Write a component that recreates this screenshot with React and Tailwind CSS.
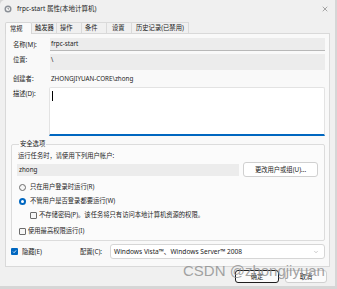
import { X, ChevronDown } from "lucide-react";

const font = { fontFamily: '"Noto Sans", "Noto Sans CJK SC", sans-serif' };

function Radio({ checked }) {
  return checked ? (
    <span className="flex h-[7px] w-[7px] items-center justify-center rounded-full bg-[#0067c0]">
      <span className="h-[3px] w-[3px] rounded-full bg-white" />
    </span>
  ) : (
    <span className="h-[7px] w-[7px] rounded-full border border-[#6b6b6b] bg-[#f6f6f6]" />
  );
}

function Check({ checked }) {
  return checked ? (
    <span className="flex h-[7px] w-[7px] items-center justify-center rounded-[1px] bg-[#0067c0]">
      <svg width="5" height="5" viewBox="0 0 10 10">
        <path d="M2 5.2 L4.2 7.4 L8.2 2.8" fill="none" stroke="white" strokeWidth="1.6" />
      </svg>
    </span>
  ) : (
    <span className="h-[7px] w-[7px] rounded-[1px] border border-[#6b6b6b] bg-[#f6f6f6]" />
  );
}

export default function App() {
  const tabs = [
    { name: "触发器", w: "w-[25px]", pl: "pl-[3px]" },
    { name: "操作", w: "w-[25px]", pl: "pl-[3px]" },
    { name: "条件", w: "w-[25px]", pl: "pl-[3px]" },
    { name: "设置", w: "w-[25px]", pl: "pl-[5px]" },
    { name: "历史记录(已禁用)", w: "w-[57px]", pl: "pl-[4px]" },
  ];

  return (
    <div className="relative h-[289px] w-[337px] overflow-hidden bg-[#d6d6d6] text-[6.3px] leading-[8px] text-[#1b1b1b]" style={font}>
      <div className="flex h-[286px] w-[335px] flex-col rounded-tl-[5px] bg-[#f0f0f0]">
        {/* title bar */}
        <div className="flex h-[17px] items-center pl-[4px] pr-[4px]">
          <svg width="8" height="8" viewBox="0 0 16 16">
            <circle cx="8" cy="8" r="7" fill="#8a8f96" />
            <circle cx="8" cy="8" r="4.2" fill="#f4f4f4" />
            <path d="M8 5.5 V8 H10" stroke="#5b6068" strokeWidth="1.3" fill="none" />
          </svg>
          <span className="ml-[5px] text-[6.5px]">frpc-start 属性(本地计算机)</span>
          <X className="ml-auto mr-[2px]" size={8} strokeWidth={1.2} color="#333" />
        </div>

        {/* tabs */}
        <div className="mt-[5px] flex h-[11px] items-end pl-[5px]">
          <div className="relative z-10 -mb-px flex h-[12px] w-[27px] items-center rounded-t-[2px] border border-b-0 border-[#d6d6d6] bg-[#f9f9f9] pl-[4px]">
            常规
          </div>
          {tabs.map((t) => (
            <div key={t.name} className={`flex h-[11px] items-center border-r border-t border-[#dadada] ${t.w} ${t.pl}`}>
              {t.name}
            </div>
          ))}
        </div>

        {/* panel */}
        <div className="ml-[5px] flex h-[234px] w-[325px] flex-col border border-[#d9d9d9] bg-[#f9f9f9] pl-[5px] pr-[4px] pt-[4px]">
          <div className="flex h-[13px] items-center pl-[2px]">
            <span className="w-[37px]">名称(M):</span>
            <div className="flex h-[13px] flex-1 items-center border-b border-[#b8b8b8] bg-[#ececec] pl-[1px]">frpc-start</div>
          </div>
          <div className="mt-[3px] flex h-[16px] items-start pl-[2px]">
            <span className="mt-[2px] w-[37px]">位置:</span>
            <div className="flex h-[16px] flex-1 items-start bg-[#ececec] pl-[1px] pt-[2px]">\</div>
          </div>
          <div className="mt-[3px] flex h-[12px] items-center pl-[2px]">
            <span className="w-[37px]">创建者:</span>
            <span className="pl-[1px]">ZHONGJIYUAN-CORE\zhong</span>
          </div>
          <div className="mt-[2px] flex pl-[2px]">
            <span className="mt-[3px] w-[36px]">描述(D):</span>
            <div className="h-[49px] flex-1 rounded-t-[2px] border border-b-2 border-[#e3e3e3] border-b-[#0067c0] bg-white pl-[2px] pt-[3px]">
              <div className="h-[10px] w-px bg-black" />
            </div>
          </div>

          {/* security options */}
          <fieldset className="mt-[4px] h-[101px] rounded-[2px] border border-[#dcdcdc] bg-[#fbfbfb] pl-[5px]">
            <legend className="ml-[2px] px-px">安全选项</legend>
            <div className="mt-[4px] pl-[1px]">运行任务时，请使用下列用户帐户:</div>
            <div className="mt-[2px] flex items-center">
              <div className="flex h-[12px] w-[222px] items-center bg-[#ececec] pl-[2px]">zhong</div>
              <div className="ml-[4px] flex h-[15px] w-[75px] items-center justify-center rounded-[3px] border border-[#d0d0d0] bg-white">
                更改用户或组(U)...
              </div>
            </div>
            <div className="mt-[3px] flex h-[14px] items-center pl-[2px]">
              <Radio />
              <span className="ml-[4px]">只在用户登录时运行(R)</span>
            </div>
            <div className="flex h-[14px] items-center pl-[2px]">
              <Radio checked />
              <span className="ml-[4px]">不管用户是否登录都要运行(W)</span>
            </div>
            <div className="flex h-[14px] items-center pl-[13px]">
              <Check />
              <span className="ml-[2px]">不存储密码(P)。该任务将只有访问本地计算机资源的权限。</span>
            </div>
            <div className="mt-[2px] flex h-[14px] items-center pl-[2px]">
              <Check />
              <span className="ml-[2px]">使用最高权限运行(I)</span>
            </div>
          </fieldset>

          <div className="mt-[3px] flex items-center">
            <Check checked />
            <span className="ml-[4px] w-[58px]">隐藏(E)</span>
            <span className="w-[30px]">配置(C):</span>
            <div className="flex h-[15px] flex-1 items-center rounded-[3px] border border-[#d6d6d6] bg-white pl-[3px] pr-[5px] text-[6.6px]">
              <span>Windows Vista™、Windows Server™ 2008</span>
              <ChevronDown className="ml-auto" size={6} strokeWidth={1.2} color="#555" />
            </div>
          </div>
        </div>

        {/* buttons */}
        <div className="mt-[3px] flex justify-end gap-[6px] pr-[8px]">
          <div className="flex h-[13px] w-[44px] items-center justify-center rounded-[3px] border border-[#1f1f1f] bg-[#fbfbfb]">确定</div>
          <div className="flex h-[13px] w-[42px] items-center justify-center rounded-[3px] border border-[#d0d0d0] bg-[#fbfbfb]">取消</div>
        </div>
      </div>

      <div
        className="pointer-events-none absolute left-[183px] top-[262px] text-[15px] leading-[18px] text-[#8c8c8c]/80"
        style={{ fontFamily: '"Liberation Sans", Arial, sans-serif' }}
      >
        CSDN @zhongjiyuan
      </div>
    </div>
  );
}
